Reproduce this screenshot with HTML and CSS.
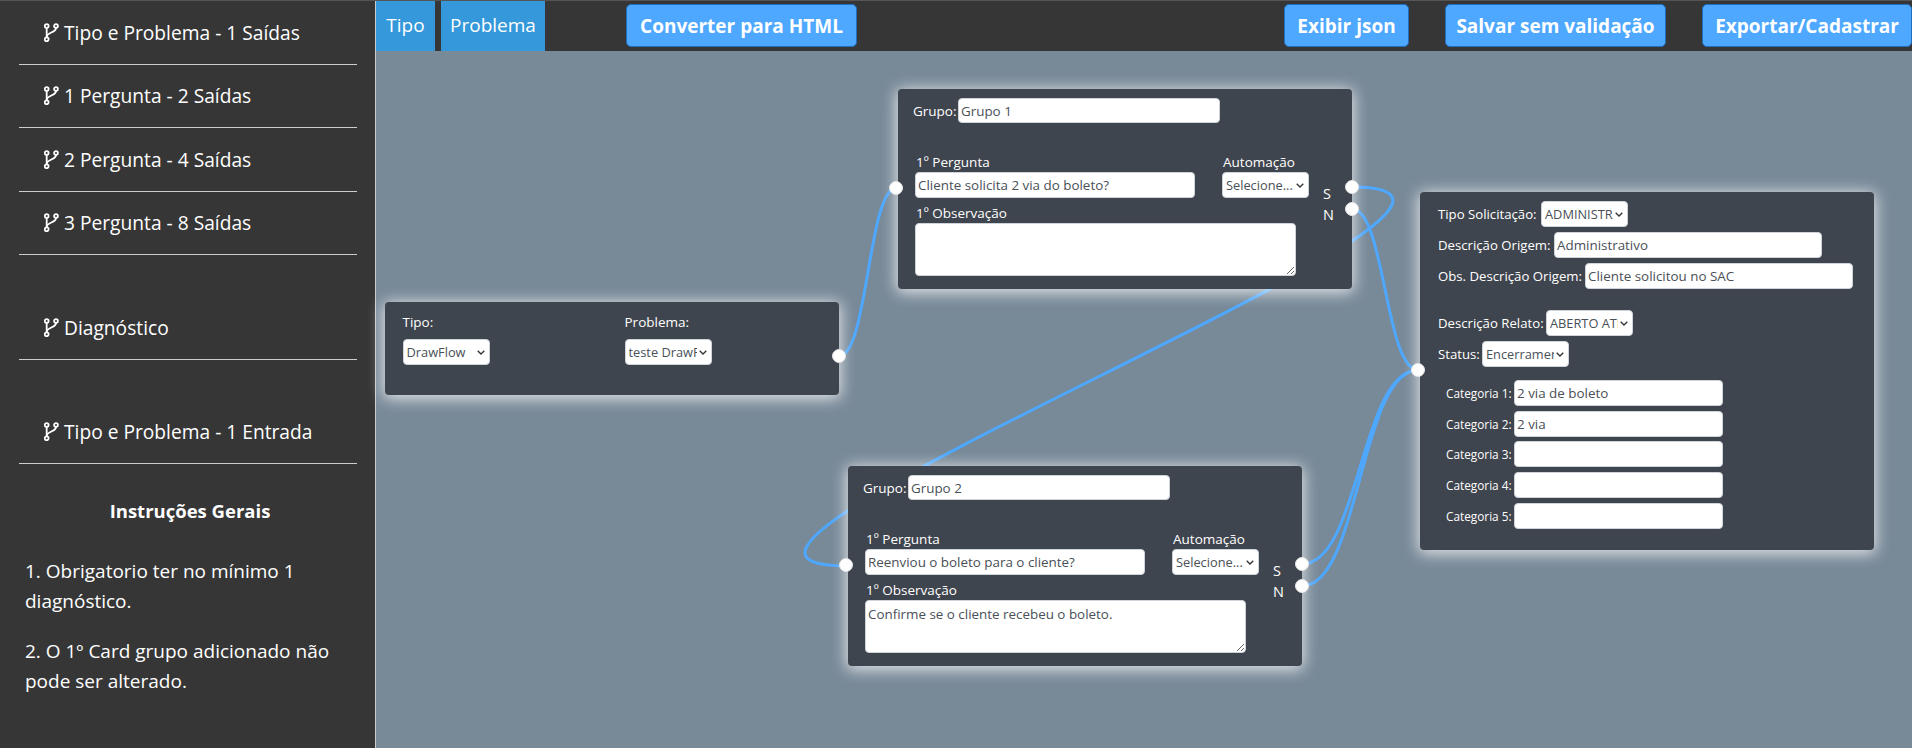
FILE: index.html
```html
<!DOCTYPE html>
<html lang="pt-BR">
<head>
    <meta charset="UTF-8">
    <meta name="viewport" content="width=device-width, initial-scale=1.0">
    <title>Fluxo DrawFlow</title>
    <link rel="stylesheet" href="styles.css">
</head>
<body>
<svg class="icon-defs" width="0" height="0">
  <symbol id="icon-branch" viewBox="0 0 15 19">
    <g fill="none" stroke="currentColor" stroke-width="1.8">
      <circle cx="2.7" cy="3" r="1.9"/>
      <circle cx="12" cy="3" r="1.9"/>
      <circle cx="2.7" cy="16.3" r="1.9"/>
      <path d="M2.7 5v9.4"/>
      <path d="M12 5c0 5-9.3 4-9.3 9"/>
    </g>
  </symbol>
</svg>
<div class="app">
  <aside class="sidebar">
    <div class="menu-item"><svg class="icon"><use href="#icon-branch"/></svg>Tipo e Problema - 1 Saídas</div>
    <div class="menu-item"><svg class="icon"><use href="#icon-branch"/></svg>1 Pergunta - 2 Saídas</div>
    <div class="menu-item"><svg class="icon"><use href="#icon-branch"/></svg>2 Pergunta - 4 Saídas</div>
    <div class="menu-item"><svg class="icon"><use href="#icon-branch"/></svg>3 Pergunta - 8 Saídas</div>
    <div class="menu-item separated"><svg class="icon"><use href="#icon-branch"/></svg>Diagnóstico</div>
    <div class="menu-item separated"><svg class="icon"><use href="#icon-branch"/></svg>Tipo e Problema - 1 Entrada</div>
    <h4 class="help-title">Instruções Gerais</h4>
    <p class="help-text">1. Obrigatorio ter no mínimo 1 diagnóstico.</p>
    <p class="help-text">2. O 1º Card grupo adicionado não pode ser alterado.</p>
  </aside>
  <main class="content">
    <header class="topbar">
      <div class="tab tab-tipo">Tipo</div>
      <div class="tab tab-problema">Problema</div>
      <button class="btn btn-html">Converter para HTML</button>
      <button class="btn btn-json">Exibir json</button>
      <button class="btn btn-salvar">Salvar sem validação</button>
      <button class="btn btn-exportar">Exportar/Cadastrar</button>
    </header>
    <div class="canvas">
      <svg class="links" width="1536" height="697">
        <path d="M463 305C492 305 492 137 520.5 137"/>
        <path d="M976 136C1229 136 217 515 470 515"/>
        <path d="M976 158C1009 158 1009 319 1042.5 319"/>
        <path d="M926 513C984 513 984 319 1042.5 319"/>
        <path d="M926 535C984 535 984 319 1042.5 319"/>
      </svg>

      <div class="node node-tipo">
        <div class="tipo-col">
          <label>Tipo:</label>
          <select><option>DrawFlow</option></select>
        </div>
        <div class="tipo-col">
          <label>Problema:</label>
          <select><option>teste DrawFlow</option></select>
        </div>
        <span class="port port-tipo-out"></span>
      </div>

      <div class="node node-grupo node-grupo1">
        <div class="grupo-row">
          <label class="grupo-label">Grupo:</label>
          <input type="text" class="grupo-input" value="Grupo 1">
        </div>
        <div class="pergunta">
          <div class="pergunta-main">
            <div class="pergunta-fields">
              <div>
                <label>1º Pergunta</label>
                <input type="text" class="pergunta-input" value="Cliente solicita 2 via do boleto?">
              </div>
              <div>
                <label>Automação</label>
                <select class="auto-select"><option>Selecione...</option></select>
              </div>
            </div>
            <label>1º Observação</label>
            <textarea class="obs"></textarea>
          </div>
          <div class="saidas"><span>S</span><span>N</span></div>
        </div>
        <span class="port port-in"></span>
        <span class="port port-s"></span>
        <span class="port port-n"></span>
      </div>

      <div class="node node-grupo node-grupo2">
        <div class="grupo-row">
          <label class="grupo-label">Grupo:</label>
          <input type="text" class="grupo-input" value="Grupo 2">
        </div>
        <div class="pergunta">
          <div class="pergunta-main">
            <div class="pergunta-fields">
              <div>
                <label>1º Pergunta</label>
                <input type="text" class="pergunta-input" value="Reenviou o boleto para o cliente?">
              </div>
              <div>
                <label>Automação</label>
                <select class="auto-select"><option>Selecione...</option></select>
              </div>
            </div>
            <label>1º Observação</label>
            <textarea class="obs">Confirme se o cliente recebeu o boleto.</textarea>
          </div>
          <div class="saidas"><span>S</span><span>N</span></div>
        </div>
        <span class="port port-in"></span>
        <span class="port port-s"></span>
        <span class="port port-n"></span>
      </div>

      <div class="node node-diag">
        <div class="diag-group">
          <div class="diag-row">
            <label class="l-tipo">Tipo Solicitação:</label>
            <select><option>ADMINISTRATIVO</option></select>
          </div>
          <div class="diag-row">
            <label class="l-origem">Descrição Origem:</label>
            <input type="text" class="diag-input" value="Administrativo">
          </div>
          <div class="diag-row">
            <label class="l-obs">Obs. Descrição Origem:</label>
            <input type="text" class="diag-input" value="Cliente solicitou no SAC">
          </div>
        </div>
        <div class="diag-group">
          <div class="diag-row">
            <label class="l-relato">Descrição Relato:</label>
            <select><option>ABERTO ATENDIMENTO</option></select>
          </div>
          <div class="diag-row">
            <label class="l-status">Status:</label>
            <select><option>Encerramento</option></select>
          </div>
        </div>
        <div class="cat-group">
          <div class="cat-row"><label>Categoria 1:</label><input type="text" class="cat-input" value="2 via de boleto"></div>
          <div class="cat-row"><label>Categoria 2:</label><input type="text" class="cat-input" value="2 via"></div>
          <div class="cat-row"><label>Categoria 3:</label><input type="text" class="cat-input"></div>
          <div class="cat-row"><label>Categoria 4:</label><input type="text" class="cat-input"></div>
          <div class="cat-row"><label>Categoria 5:</label><input type="text" class="cat-input"></div>
        </div>
        <span class="port port-diag-in"></span>
      </div>
    </div>
  </main>
</div>
</body>
</html>
```

FILE: styles.css
```css
*{
  box-sizing: border-box;
}
body{
  margin: 0;
  height: 100vh;
  overflow: hidden;
  font-family: "Open Sans", sans-serif;
  background: #363636;
  color: #fff;
}
.icon-defs{
  position: absolute;
}
.app{
  display: flex;
  height: 100%;
  border-top: 1px solid #555;
}

/* menu lateral */
.sidebar{
  flex: 0 0 376px;
  padding: 0 18px 0 19px;
  border-right: 1px solid #ccc;
  background: #363636;
}
.menu-item{
  display: flex;
  align-items: center;
  gap: 5px;
  height: 63.5px;
  padding-left: 25px;
  border-bottom: 1px solid #ccc;
  font-size: 19.2px;
}
.menu-item.separated{
  margin-top: 41px;
}
.icon{
  width: 15px;
  height: 19px;
  flex: none;
  color: #fff;
}
.help-title{
  margin: 33px 0 0;
  padding-left: 4px;
  font-size: 18.5px;
  font-weight: 700;
  line-height: 28px;
  text-align: center;
}
.help-text{
  margin: 30px 0 0;
  padding-left: 6px;
  font-size: 19px;
  line-height: 30px;
}
.help-title + .help-text{
  margin-top: 31px;
}
.help-text + .help-text{
  margin-top: 20px;
}

/* barra superior */
.content{
  flex: 1;
  display: flex;
  flex-direction: column;
  min-width: 0;
}
.topbar{
  display: flex;
  flex: 0 0 50px;
  align-items: flex-start;
  background: #363636;
}
.tab{
  height: 50px;
  background: #3498db;
  font-size: 19px;
  line-height: 49px;
  text-align: center;
}
.tab-tipo{
  width: 59px;
}
.tab-problema{
  width: 104px;
  margin-left: 6px;
}
.btn{
  height: 43px;
  margin-top: 3px;
  padding: 0;
  border: 1px solid #1f6fbf;
  border-radius: 5px;
  background: #4ea8ff;
  color: #fff;
  font-family: "Open Sans", sans-serif;
  font-size: 19px;
  font-weight: 700;
  white-space: nowrap;
}
.btn-html{
  width: 231px;
  margin-left: 81px;
}
.btn-json{
  width: 125px;
  margin-left: 427px;
}
.btn-salvar{
  width: 221px;
  margin-left: 36px;
}
.btn-exportar{
  width: 210px;
  margin-left: 36px;
}

/* area do fluxo */
.canvas{
  flex: 1;
  position: relative;
  background: #788998;
}
.links{
  position: absolute;
  left: 0;
  top: 0;
  overflow: visible;
}
.links path{
  fill: none;
  stroke: #4ea8ff;
  stroke-width: 3px;
}
.node{
  position: absolute;
  width: 454px;
  border-radius: 4px;
  background: #3f454e;
  box-shadow: 0 2px 15px 2px rgba(255,255,255,0.75);
  font-size: 13.5px;
  line-height: 20px;
}
.node label{
  white-space: nowrap;
}
.node input,
.node select,
.node textarea{
  height: 26px;
  border: 1px solid #ced4da;
  border-radius: 4px;
  background: #fff;
  color: #495057;
  font-family: "Open Sans", sans-serif;
  font-size: 13.4px;
}
.node input,
.node textarea{
  padding: 0 2px;
}
.node select{
  appearance: none;
  flex: none;
  width: 87px;
  padding: 0 14px 0 3px;
  background: #fff url("data:image/svg+xml,%3Csvg xmlns='http://www.w3.org/2000/svg' width='8' height='5'%3E%3Cpath d='M.7.7 4 4l3.3-3.3' fill='none' stroke='%23333' stroke-width='1.3'/%3E%3C/svg%3E") no-repeat right 4px center;
  font-size: 12.8px;
}
.port{
  position: absolute;
  width: 14px;
  height: 14px;
  border: 1px solid #e4e6e8;
  border-radius: 50%;
  background: #fff;
}

.node-tipo{
  left: 9px;
  top: 251px;
  height: 93px;
  display: flex;
  padding: 10px 0 0 17.5px;
}
.tipo-col{
  flex: none;
  width: 222px;
}
.tipo-col label{
  display: block;
  margin-bottom: 7px;
}
.port-tipo-out{
  left: 447px;
  top: 47px;
}

.node-grupo{
  height: 200px;
  padding: 9px 0 0 17px;
}
.node-grupo1{
  left: 522px;
  top: 38px;
}
.node-grupo2{
  left: 472px;
  top: 415px;
}
.grupo-row{
  display: flex;
  align-items: center;
  margin-left: -2px;
}
.grupo-label{
  width: 45px;
}
.node input.grupo-input{
  width: 262px;
  height: 25px;
}
.pergunta{
  display: flex;
  margin-top: 29px;
}
.pergunta-main{
  width: 394px;
}
.pergunta-main > label,
.pergunta-fields label{
  display: block;
  padding-left: 1px;
}
.pergunta-fields{
  display: flex;
  gap: 27px;
  margin-bottom: 5px;
}
.node input.pergunta-input{
  display: block;
  width: 280px;
}
.node select.auto-select{
  display: block;
}
.node textarea.obs{
  display: block;
  width: 381px;
  height: 53px;
  padding-top: 4px;
}
.saidas{
  display: flex;
  flex-direction: column;
  margin: 31px 0 0 14px;
  font-size: 14.5px;
  line-height: 21px;
}
.port-in{
  left: -9px;
  top: 92px;
}
.port-s{
  left: 447px;
  top: 91px;
}
.port-n{
  left: 447px;
  top: 113px;
}

.node-diag{
  left: 1044px;
  top: 141px;
  height: 358px;
  padding: 9px 0 0 18px;
  font-size: 13.2px;
}
.diag-group{
  display: flex;
  flex-direction: column;
  gap: 5px;
  margin-bottom: 21px;
}
.diag-group + .diag-group{
  margin-bottom: 13px;
}
.diag-row{
  display: flex;
  align-items: center;
}
.node input.diag-input{
  width: 268px;
}
.l-tipo{
  width: 103px;
}
.l-origem{
  width: 116px;
}
.l-obs{
  width: 147px;
}
.l-relato{
  width: 108px;
}
.l-status{
  width: 44px;
}
.cat-group{
  display: flex;
  flex-direction: column;
  gap: 4.7px;
  padding-left: 8px;
}
.cat-row{
  display: flex;
  align-items: center;
  font-size: 11.8px;
}
.cat-row label{
  width: 68px;
}
.node input.cat-input{
  width: 209px;
}
.port-diag-in{
  left: -9px;
  top: 171px;
}
```
